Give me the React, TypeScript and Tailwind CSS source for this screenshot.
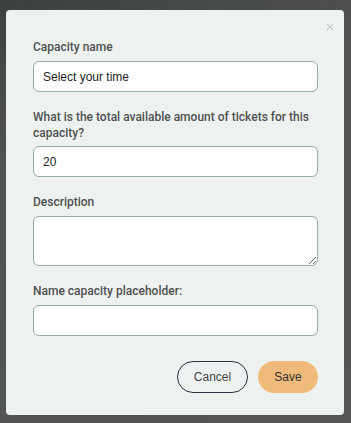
import { X } from "lucide-react";

const inputCls =
  "block w-full h-[31px] rounded-[6px] border border-[#93aba3] bg-white px-[9px] text-[12px] text-[#222] outline-none";

function Label({ children }: { children: React.ReactNode }) {
  return (
    <label className="block text-[12px] leading-[16px] font-medium text-[#505050] [font-family:Roboto,sans-serif]">
      {children}
    </label>
  );
}

export default function App() {
  return (
    <div className="h-[423px] w-[351px] bg-[linear-gradient(160deg,#3b413f_0%,#515352_30%,#545654_100%)] pt-[10px] pl-[6px] pr-[7px] [font-family:'Liberation_Sans',Arial,sans-serif]">
      <div className="relative h-[405px] w-[338px] rounded-[4px] bg-[#edf2f0] pl-[27px] pr-[26px] pt-[29px] pb-[24px]">
        <button className="absolute right-[8px] top-[11px] text-[#b4b8b6]">
          <X className="h-[12px] w-[12px]" strokeWidth={1.75} />
        </button>

        <div className="flex flex-col">
          <Label>Capacity name</Label>
          <input className={`${inputCls} mt-[6px]`} defaultValue="Select your time" />

          <div className="mt-[17px]">
            <Label>What is the total available amount of tickets for this capacity?</Label>
          </div>
          <input className={`${inputCls} mt-[5px]`} defaultValue="20" />

          <div className="mt-[17px]">
            <Label>Description</Label>
          </div>
          <textarea className="mt-[6px] block h-[50px] w-full rounded-[6px] border border-[#93aba3] bg-white px-[9px] py-[6px] text-[12px] outline-none" />

          <div className="mt-[17px]">
            <Label>Name capacity placeholder:</Label>
          </div>
          <input className={`${inputCls} mt-[6px]`} />

          <div className="mt-[25px] flex justify-end gap-[10px]">
            <button className="h-[32px] w-[71px] rounded-full border border-[#2c3040] text-[12px] text-[#444]">
              Cancel
            </button>
            <button className="h-[32px] w-[60px] rounded-full bg-[#f0bb7a] text-[12px] text-[#333]">
              Save
            </button>
          </div>
        </div>
      </div>
    </div>
  );
}
